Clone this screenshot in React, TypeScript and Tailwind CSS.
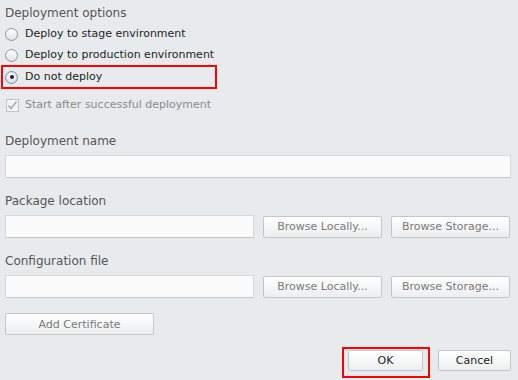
import React from 'react';

const font = { fontFamily: '"DejaVu Sans", Verdana, sans-serif' };

function Radio({ checked, label }: { checked?: boolean; label: string }) {
  return (
    <div className="flex items-center h-[21px]">
      <span
        className={`w-[13px] h-[13px] rounded-full border flex items-center justify-center bg-gradient-to-b from-white to-[#dfe2e5] ${
          checked ? 'border-[#6d8fb0] shadow-[inset_0_0_0_1px_#cfe0f0]' : 'border-[#8e9499]'
        }`}
      >
        {checked && <span className="w-[4px] h-[4px] rounded-full bg-[#222]" />}
      </span>
      <span className="ml-[7px] text-[11px] text-[#1e1e1e]">{label}</span>
    </div>
  );
}

function Btn({ label, w, h = 'h-[22px]', dark }: { label: string; w: string; h?: string; dark?: boolean }) {
  return (
    <button
      className={`${w} ${h} block rounded-[2px] border border-[#c3c7cb] bg-gradient-to-b from-white to-[#eceef0] text-[11px] leading-none ${
        dark ? 'text-[#222]' : 'text-[#7a7a7a]'
      }`}
    >
      {label}
    </button>
  );
}

function Field({ w }: { w: string }) {
  return <div className={`${w} h-[23px] bg-[#fafafa] border border-[#d4d8dc] border-b-[#c2c7cc] rounded-[1px]`} />;
}

function Label({ text, mt }: { text: string; mt: string }) {
  return <div className={`${mt} h-[23px] leading-[18px] text-[12px] text-[#555]`}>{text}</div>;
}

export default function App() {
  return (
    <div className="w-[518px] h-[380px] bg-[#e8ebee] pl-[5px] pr-[7px] overflow-hidden" style={font}>
      <div className="pt-[5px] h-[24px] leading-[16px] text-[12px] text-[#555]">Deployment options</div>
      <Radio label="Deploy to stage environment" />
      <Radio label="Deploy to production environment" />
      <div className="ml-[-4px] mt-[-1px] w-[216px] h-[24px] border-2 border-[#f00] pl-[2px] flex items-center">
        <Radio checked label="Do not deploy" />
      </div>

      <div className="flex items-center h-[21px] mt-[6px]">
        <span className="w-[13px] h-[13px] ml-[1px] border border-[#c0c4c8] bg-[#f3f4f5] flex items-center justify-center">
          <svg width="11" height="11" viewBox="0 0 11 11">
            <path d="M1.5 5.5 L4 8.5 L9.5 1.5" fill="none" stroke="#a8acb0" strokeWidth="1.6" />
          </svg>
        </span>
        <span className="ml-[6px] text-[11px] text-[#8a8a8a]">Start after successful deployment</span>
      </div>

      <Label mt="mt-[16px]" text="Deployment name" />
      <Field w="w-full" />

      <Label mt="mt-[14px]" text="Package location" />
      <div className="flex items-center gap-[9px]">
        <Field w="w-[249px]" />
        <Btn w="w-[119px]" label="Browse Locally..." />
        <Btn w="w-[119px]" label="Browse Storage..." />
      </div>

      <Label mt="mt-[14px]" text="Configuration file" />
      <div className="flex items-center gap-[9px]">
        <Field w="w-[249px]" />
        <Btn w="w-[119px]" label="Browse Locally..." />
        <Btn w="w-[119px]" label="Browse Storage..." />
      </div>

      <div className="mt-[15px]">
        <Btn w="w-[149px]" label="Add Certificate" />
      </div>

      <div className="flex justify-end items-start mt-[12px] gap-[8px]">
        <div className="border-2 border-[#f00] pt-[1px] pl-[4px] pr-[5px] pb-[5px]">
          <Btn w="w-[75px]" h="h-[21px]" label="OK" dark />
        </div>
        <div className="pt-[3px]">
          <Btn w="w-[73px]" h="h-[21px]" label="Cancel" dark />
        </div>
      </div>
    </div>
  );
}
